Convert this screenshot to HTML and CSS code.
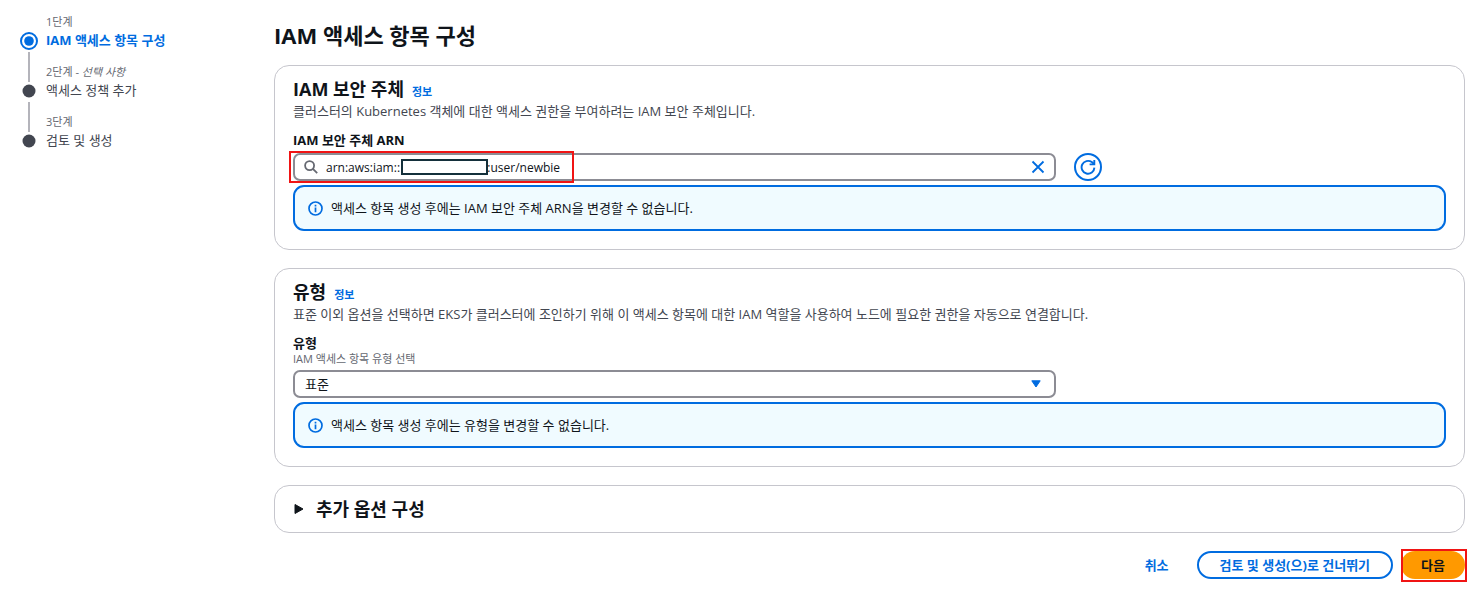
FILE: index.html
```html
<!DOCTYPE html>
<html lang="ko">
<head>
  <meta charset="UTF-8" />
  <meta name="viewport" content="width=device-width, initial-scale=1.0"/>
  <title>IAM 액세스 항목 구성</title>
  <link rel="stylesheet" href="styles.css">
</head>
<body>
  <div class="wizard">
    <nav class="steps">
      <ol>
        <li class="step active">
          <div class="marker">
            <svg width="18" height="18" viewBox="0 0 18 18"><circle cx="9" cy="9" r="8" fill="#fff" stroke="#006ce0" stroke-width="2"/><circle cx="9" cy="9" r="4.8" fill="#006ce0"/></svg>
          </div>
          <div class="step-text">
            <span class="step-label">1단계</span>
            <span class="step-title">IAM 액세스 항목 구성</span>
          </div>
        </li>
        <li class="step">
          <div class="marker">
            <svg width="18" height="18" viewBox="0 0 18 18"><circle cx="9" cy="9" r="6.5" fill="#424650"/></svg>
          </div>
          <div class="step-text">
            <span class="step-label">2단계 - <i>선택 사항</i></span>
            <span class="step-title">액세스 정책 추가</span>
          </div>
        </li>
        <li class="step">
          <div class="marker">
            <svg width="18" height="18" viewBox="0 0 18 18"><circle cx="9" cy="9" r="6.5" fill="#424650"/></svg>
          </div>
          <div class="step-text">
            <span class="step-label">3단계</span>
            <span class="step-title">검토 및 생성</span>
          </div>
        </li>
      </ol>
    </nav>

    <main class="content">
      <h1>IAM 액세스 항목 구성</h1>

      <section class="card">
        <div class="card-header">
          <h2>IAM 보안 주체</h2>
          <a href="#" class="info">정보</a>
        </div>
        <p class="description">클러스터의 Kubernetes 객체에 대한 액세스 권한을 부여하려는 IAM 보안 주체입니다.</p>

        <label class="field-label" for="arn">IAM 보안 주체 ARN</label>
        <div class="field-row">
          <div class="control">
            <svg class="search-icon" width="14" height="14" viewBox="0 0 14 14" fill="none" stroke="#656871" stroke-width="1.8"><circle cx="5.6" cy="5.6" r="4.5"/><path d="M8.9 8.9L13.2 13.2"/></svg>
            <input type="text" id="arn" class="box arn" value="arn:aws:iam::                            :user/newbie">
            <span class="mask"></span>
            <button type="button" class="clear" aria-label="지우기">
              <svg width="14" height="14" viewBox="0 0 14 14" fill="none" stroke="#006ce0" stroke-width="1.8"><path d="M1.5 1.5L12.5 12.5M12.5 1.5L1.5 12.5"/></svg>
            </button>
            <span class="highlight highlight-arn"></span>
          </div>
          <button type="button" class="refresh" aria-label="새로 고침">
            <svg width="16" height="16" viewBox="0 0 16 16" fill="none" stroke="#006ce0" stroke-width="1.9"><path d="M14.4 8.6A6.4 6.4 0 1 1 11.8 3.1L14 5"/><path d="M14.3 1V5.4H9.6"/></svg>
          </button>
        </div>
        <div class="alert">
          <svg width="15" height="15" viewBox="0 0 15 15" fill="none" stroke="#006ce0" stroke-width="1.7"><circle cx="7.5" cy="7.5" r="6.5"/><path d="M7.5 6.4V11.2M7.5 3.7V5.4"/></svg>
          <span>액세스 항목 생성 후에는 IAM 보안 주체 ARN을 변경할 수 없습니다.</span>
        </div>
      </section>

      <section class="card">
        <div class="card-header">
          <h2>유형</h2>
          <a href="#" class="info">정보</a>
        </div>
        <p class="description">표준 이외 옵션을 선택하면 EKS가 클러스터에 조인하기 위해 이 액세스 항목에 대한 IAM 역할을 사용하여 노드에 필요한 권한을 자동으로 연결합니다.</p>

        <label class="field-label" for="type">유형</label>
        <p class="hint">IAM 액세스 항목 유형 선택</p>
        <div class="field-row">
          <div class="control">
            <select id="type" class="box type">
              <option>표준</option>
            </select>
            <svg class="caret" width="10" height="8" viewBox="0 0 10 8"><path d="M0.8 0.8H9.2L5 7Z" fill="#006ce0" stroke="#006ce0" stroke-linejoin="round"/></svg>
          </div>
        </div>
        <div class="alert">
          <svg width="15" height="15" viewBox="0 0 15 15" fill="none" stroke="#006ce0" stroke-width="1.7"><circle cx="7.5" cy="7.5" r="6.5"/><path d="M7.5 6.4V11.2M7.5 3.7V5.4"/></svg>
          <span>액세스 항목 생성 후에는 유형을 변경할 수 없습니다.</span>
        </div>
      </section>

      <section class="card collapsed">
        <button type="button" class="expander" aria-expanded="false">
          <svg width="12" height="12" viewBox="0 0 12 12"><path d="M2 1.5V10.5L10 6Z" fill="#0f141a" stroke="#0f141a" stroke-linejoin="round"/></svg>
          <span>추가 옵션 구성</span>
        </button>
      </section>

      <div class="actions">
        <button type="button" class="btn link">취소</button>
        <button type="button" class="btn outline">검토 및 생성(으)로 건너뛰기</button>
        <div class="next">
          <button type="button" class="btn primary">다음</button>
          <span class="highlight highlight-next"></span>
        </div>
      </div>
    </main>
  </div>
</body>
</html>
```

FILE: styles.css
```css
* {
  box-sizing: border-box;
}

body {
  margin: 0;
  font-family: "Open Sans", "Noto Sans CJK KR", sans-serif;
  font-size: 13px;
  line-height: 20px;
  color: #0f141a;
  background: #fff;
}

h1, h2, p, ol {
  margin: 0;
  padding: 0;
}

button, input, select {
  font: inherit;
  color: inherit;
}

button {
  padding: 0;
  border: none;
  background: none;
  cursor: pointer;
}

svg {
  display: block;
  flex: none;
}

.wizard {
  display: flex;
  gap: 36px;
  padding: 14px 12px 14px 20px;
}

/* steps */
.steps {
  flex: none;
  width: 218px;
}

.steps ol {
  list-style: none;
}

.step {
  display: flex;
  gap: 8px;
  height: 50px;
  color: #424650;
}

.marker {
  display: flex;
  flex-direction: column;
  align-items: center;
  gap: 2px;
  padding-top: 18px;
  margin-bottom: -18px;
}

.step:not(:last-child) .marker::after {
  content: "";
  flex: 1;
  width: 2px;
  background: #b4b4bb;
}

.step-label {
  display: block;
  font-size: 11px;
  line-height: 16px;
  color: #656871;
}

.step-title {
  display: block;
}

.active .step-title {
  font-weight: 700;
  color: #006ce0;
}

/* content */
.content {
  flex: 1;
  min-width: 0;
}

h1 {
  font-size: 22px;
  line-height: 28px;
  margin: 7px 0 16px;
}

.card {
  padding: 11px 18px 18px;
  margin-bottom: 18px;
  border: 1px solid #c6c6cd;
  border-radius: 15px;
}

.card-header {
  display: flex;
  align-items: baseline;
  gap: 8px;
}

h2 {
  font-size: 18px;
  line-height: 24px;
}

.info {
  font-size: 11px;
  line-height: 16px;
  font-weight: 700;
  color: #006ce0;
  text-decoration: none;
}

.description {
  color: #424650;
}

.field-label {
  display: block;
  margin-top: 10px;
  line-height: 18px;
  font-weight: 700;
}

.hint {
  font-size: 11px;
  line-height: 14px;
  color: #656871;
}

.field-row {
  display: grid;
  grid-template-columns: repeat(12, 1fr);
  column-gap: 18px;
  margin: 4px 0;
}

.control {
  grid-column: span 8;
  position: relative;
}

.box {
  display: block;
  width: 100%;
  height: 28px;
  border: 2px solid #8c8c94;
  border-radius: 7px;
  background: #fff;
}

.arn {
  padding: 0 36px 0 31px;
  font-size: 12px;
}

.type {
  appearance: none;
  padding: 0 36px 0 10px;
}

.search-icon {
  position: absolute;
  top: 7px;
  left: 11px;
}

.mask {
  position: absolute;
  top: 6px;
  left: 108px;
  width: 87px;
  height: 16px;
  border: 2px solid #14303b;
  background: #fff;
}

.clear {
  position: absolute;
  top: 7px;
  right: 11px;
}

.caret {
  position: absolute;
  top: 10px;
  right: 15px;
}

.refresh {
  display: flex;
  align-items: center;
  justify-content: center;
  width: 28px;
  height: 28px;
  border: 2px solid #006ce0;
  border-radius: 50%;
}

.alert {
  display: flex;
  align-items: center;
  gap: 8px;
  padding: 11px 13px;
  border: 2px solid #006ce0;
  border-radius: 11px;
  background: #f0fbff;
}

.collapsed {
  padding: 11px 18px;
}

.expander {
  display: flex;
  align-items: center;
  gap: 11px;
  font-size: 18px;
  line-height: 24px;
  font-weight: 700;
}

/* actions */
.actions {
  display: flex;
  justify-content: flex-end;
  gap: 8px;
}

.btn {
  padding: 2px 18px;
  border: 2px solid transparent;
  border-radius: 18px;
  font-weight: 700;
}

.link {
  color: #006ce0;
}

.outline {
  padding: 2px 21px;
  color: #006ce0;
  border-color: #006ce0;
}

.next {
  position: relative;
}

.primary {
  background: #ff9900;
}

/* red callouts */
.highlight {
  position: absolute;
  border: 2px solid #f01414;
  pointer-events: none;
}

.highlight-arn {
  top: -2px;
  left: -4px;
  width: 285px;
  height: 32px;
}

.highlight-next {
  inset: -2px -2px -3px 0;
}
```
